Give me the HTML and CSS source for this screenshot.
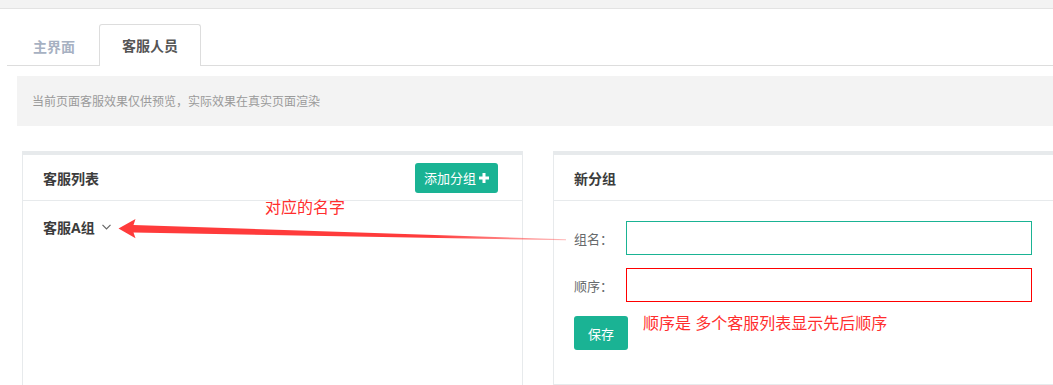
FILE: index.html
```html
<!DOCTYPE html>
<html lang="zh-CN">
<head>
<meta charset="utf-8">
<title>客服人员</title>
<link rel="stylesheet" href="styles.css">
</head>
<body>
<div class="topbar"></div>
<div class="page">
  <ul class="tabs">
    <li class="tab">主界面</li>
    <li class="tab active">客服人员</li>
  </ul>
  <div class="notice">当前页面客服效果仅供预览，实际效果在真实页面渲染</div>
  <div class="panels">
    <div class="panel panel-left">
      <div class="panel-head">
        <span class="panel-title">客服列表</span>
        <button class="btn btn-add">添加分组<svg class="plus" width="10" height="10" viewBox="0 0 10 10"><rect x="3.5" y="0" width="3" height="10" fill="#fff"/><rect x="0" y="3.5" width="10" height="3" fill="#fff"/></svg></button>
      </div>
      <div class="panel-body">
        <div class="group">客服A组<svg class="chev" width="9" height="6" viewBox="0 0 9 6"><path d="M0.5 0.8 L4.5 4.8 L8.5 0.8" fill="none" stroke="#666" stroke-width="1.2"/></svg></div>
      </div>
      <div class="note note-name">对应的名字</div>
    </div>
    <div class="panel panel-right">
      <div class="panel-head">
        <span class="panel-title">新分组</span>
      </div>
      <div class="panel-body form">
        <div class="row">
          <label class="label">组名：</label>
          <input class="input input-focus" type="text">
        </div>
        <div class="row">
          <label class="label">顺序：</label>
          <input class="input input-error" type="text">
        </div>
        <div class="row row-actions">
          <button class="btn btn-save">保存</button>
          <span class="note note-order">顺序是 多个客服列表显示先后顺序</span>
        </div>
      </div>
    </div>
  </div>
</div>
<svg class="arrow" width="1053" height="385" viewBox="0 0 1053 385">
  <defs>
    <linearGradient id="fade" x1="119" y1="0" x2="566" y2="0" gradientUnits="userSpaceOnUse">
      <stop offset="0" stop-color="#ff3b3b"/>
      <stop offset="0.7" stop-color="#ff3b3b"/>
      <stop offset="1" stop-color="#ff3b3b" stop-opacity="0.35"/>
    </linearGradient>
  </defs>
  <polygon points="118.5,228.5 135.5,219 133.5,225 566,239.3 566,240.3 133.5,232.5 135.5,238.3" fill="url(#fade)"/>
</svg>
</body>
</html>
```
FILE: styles.css
```css
* { box-sizing: border-box; }
html, body { margin: 0; padding: 0; }
body {
  width: 1053px;
  height: 385px;
  overflow: hidden;
  background: #fff;
  font-family: "Open Sans", "Noto Sans CJK SC", sans-serif;
  color: #676a6c;
  position: relative;
}
.topbar {
  height: 9px;
  background: #f3f3f3;
  border-bottom: 1px solid #e3e3e3;
}
.page {
  padding-top: 15px;
}
.tabs {
  list-style: none;
  margin: 0 0 0 7px;
  padding: 0 0 0 3px;
  display: flex;
  border-bottom: 1px solid #dddddd;
  height: 42px;
}
.tab {
  height: 42px;
  padding: 0 22px;
  border: 1px solid transparent;
  border-bottom: none;
  margin-right: 1px;
  display: flex;
  align-items: center;
  font-size: 14px;
  font-weight: 700;
  color: #a7b1c2;
}
.tab.active {
  color: #555;
  border-color: #dddddd;
  border-radius: 3px 3px 0 0;
  background: #fff;
  height: 42px;
  margin-bottom: -1px;
  padding-bottom: 1px;
}
.notice {
  margin: 10px 0 0 17px;
  height: 50px;
  background: #f3f3f3;
  padding-left: 15px;
  display: flex;
  align-items: center;
  font-size: 12px;
  color: #9a9a9a;
}
.panels {
  display: flex;
  align-items: flex-start;
  gap: 30px;
  margin: 25px 0 0 22px;
}
.panel {
  width: 501px;
  flex: none;
  border: 1px solid #e7eaec;
  border-top: 4px solid #e7eaec;
  background: #fff;
  position: relative;
}
.panel-left { min-height: 260px; }
.panel-head {
  height: 46px;
  border-bottom: 1px solid #e7eaec;
  display: flex;
  align-items: center;
  justify-content: space-between;
  padding: 0 24px 0 20px;
}
.panel-title {
  font-size: 14px;
  font-weight: 700;
  color: #3c3c3c;
}
.btn {
  border: none;
  border-radius: 3px;
  background: #1ab394;
  color: #fff;
  font-family: inherit;
  font-size: 13px;
  display: flex;
  align-items: center;
  justify-content: center;
  cursor: pointer;
}
.btn-add {
  height: 30px;
  width: 83px;
  padding: 0;
  gap: 3px;
}
.plus { display: block; }
.panel-body {
  padding: 16px 20px;
}
.group {
  display: flex;
  align-items: center;
  height: 20px;
  font-size: 14px;
  font-weight: 700;
  color: #3c3c3c;
}
.chev {
  margin-left: 7px;
  display: block;
}
.note {
  color: #ff2e2e;
  font-size: 16px;
  line-height: 16px;
  font-weight: 400;
}
.note-name {
  position: absolute;
  left: 242px;
  top: 44px;
}
.form {
  padding: 20px 20px 34px 20px;
}
.row {
  display: flex;
  align-items: center;
  margin-bottom: 13px;
}
.row:nth-child(2) { margin-bottom: 14px; }
.row-actions {
  align-items: flex-start;
  margin-bottom: 0;
}
.label {
  width: 52px;
  flex: none;
  font-size: 13px;
  color: #676a6c;
}
.input {
  width: 406px;
  height: 34px;
  border: 1px solid #e5e6e7;
  outline: none;
  padding: 0 10px;
  background: #fff;
}
.input-focus { border-color: #1ab394; }
.input-error { border-color: #ff0000; }
.btn-save {
  width: 54px;
  height: 34px;
  padding: 0;
}
.note-order {
  margin-left: 15px;
  margin-top: -1px;
}
.arrow {
  position: absolute;
  left: 0;
  top: 0;
  pointer-events: none;
}
```
